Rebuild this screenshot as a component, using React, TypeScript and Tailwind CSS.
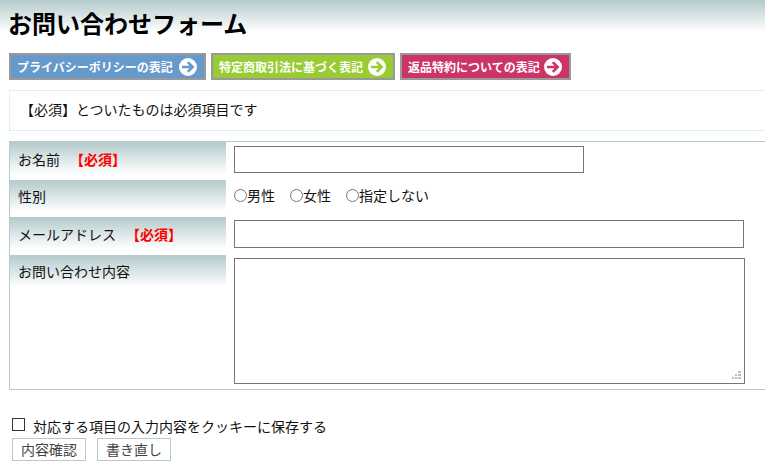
import React from "react";

const FONT = "font-['Noto_Sans_CJK_JP','Noto_Sans',sans-serif]";

const ArrowCircle = ({ color }: { color: string }) => (
  <svg width="18" height="18" viewBox="0 0 18 18" className="shrink-0">
    <circle cx="9" cy="9" r="9" fill="#fff" />
    <path d="M3 9H13.5M8.8 4.2L13.6 9L8.8 13.8" fill="none" stroke={color} strokeWidth="2.6" />
  </svg>
);

const LinkButton = ({ label, bg, color, width }: { label: string; bg: string; color: string; width: string }) => (
  <a className={`flex h-[27px] items-center justify-between border-2 border-[#999999] pl-[6px] pr-[7px] text-[12px] font-bold text-white ${bg} ${width}`}>
    <span>{label}</span>
    <ArrowCircle color={color} />
  </a>
);

const Required = () => <span className="ml-[10px] font-bold text-[#ff0000]">【必須】</span>;

const Label = ({ children, height, pad }: { children: React.ReactNode; height: string; pad: string }) => (
  <div className={`w-[216px] shrink-0 bg-white bg-[linear-gradient(#b4cacc,#ffffff_32px)] pl-[8px] text-[14px] leading-[20px] ${height} ${pad}`}>
    {children}
  </div>
);

export default function App() {
  return (
    <div className={`h-[472px] w-[765px] overflow-hidden bg-white text-[#111] ${FONT}`}>
      <h1 className="h-[53px] bg-[linear-gradient(#b4cacc,#ffffff_32px)] pl-[8px] pt-[5px] text-[24px] leading-[36px] font-bold text-black">
        お問い合わせフォーム
      </h1>

      <div className="ml-[9px] flex gap-[5px]">
        <LinkButton label="プライバシーポリシーの表記" bg="bg-[#6699cc]" color="#6699cc" width="w-[197px]" />
        <LinkButton label="特定商取引法に基づく表記" bg="bg-[#99cc33]" color="#99cc33" width="w-[184px]" />
        <LinkButton label="返品特約についての表記" bg="bg-[#cc3366]" color="#cc3366" width="w-[171px]" />
      </div>

      <p className="mt-[10px] ml-[9px] flex h-[41px] items-center border-y border-l border-dotted border-[#c8e0e0] pb-[2px] pl-[10px] text-[14px]">
        【必須】とついたものは必須項目です
      </p>

      <div className="mt-[10px] ml-[9px] border-y border-l border-[#b4cacc]">
        <div className="flex h-[38px]">
          <Label height="h-[38px]" pad="pt-[7px]">
            お名前<Required />
          </Label>
          <div className="pt-[4px] pl-[8px]">
            <input className="block h-[27px] w-[350px] border border-[#767676] bg-white" />
          </div>
        </div>
        <div className="flex h-[37px]">
          <Label height="h-[37px]" pad="pt-[6px]">
            性別
          </Label>
          <div className="flex gap-[15px] pt-[5px] pl-[8px] text-[14px] leading-[20px]">
            <label className="flex h-[20px] items-center"><input type="radio" name="sex" className="m-0 h-[13px] w-[13px]" />男性</label>
            <label className="flex h-[20px] items-center"><input type="radio" name="sex" className="m-0 h-[13px] w-[13px]" />女性</label>
            <label className="flex h-[20px] items-center"><input type="radio" name="sex" className="m-0 h-[13px] w-[13px]" />指定しない</label>
          </div>
        </div>
        <div className="flex h-[38px]">
          <Label height="h-[38px]" pad="pt-[7px]">
            メールアドレス<Required />
          </Label>
          <div className="pt-[3px] pl-[8px]">
            <input className="block h-[28px] w-[510px] border border-[#767676] bg-white" />
          </div>
        </div>
        <div className="flex h-[134px]">
          <Label height="h-[134px]" pad="pt-[6px]">
            お問い合わせ内容
          </Label>
          <div className="pt-[3px] pl-[8px]">
            <div className="relative h-[126px] w-[511px]">
              <textarea className="block h-full w-full resize-none border border-[#767676] bg-white" />
              {/* resize grip dots */}
              <svg width="10" height="10" viewBox="0 0 10 10" className="absolute right-[3px] bottom-[3px]" fill="#bdbdbd">
                <rect x="6" y="0" width="3" height="2" />
                <rect x="3" y="3" width="2" height="2" />
                <rect x="6" y="3" width="3" height="2" />
                <rect x="0" y="6" width="2" height="2" />
                <rect x="3" y="6" width="2" height="2" />
                <rect x="6" y="6" width="3" height="2" />
              </svg>
            </div>
          </div>
        </div>
      </div>

      <label className="mt-[26px] ml-[12px] flex h-[20px] items-center text-[14px] leading-[20px]">
        <input type="checkbox" className="mr-[8px] mb-[3px] h-[13px] w-[13px] appearance-none border border-[#333333] bg-white" />
        対応する項目の入力内容をクッキーに保存する
      </label>
      <div className="mt-[2px] ml-[12px] flex gap-[11px]">
        <button className="h-[23px] w-[74px] border border-[#b4cacc] pb-[3px] text-[14px] leading-[20px] text-[#444]">内容確認</button>
        <button className="h-[23px] w-[74px] border border-[#b4cacc] pb-[3px] text-[14px] leading-[20px] text-[#444]">書き直し</button>
      </div>
    </div>
  );
}
